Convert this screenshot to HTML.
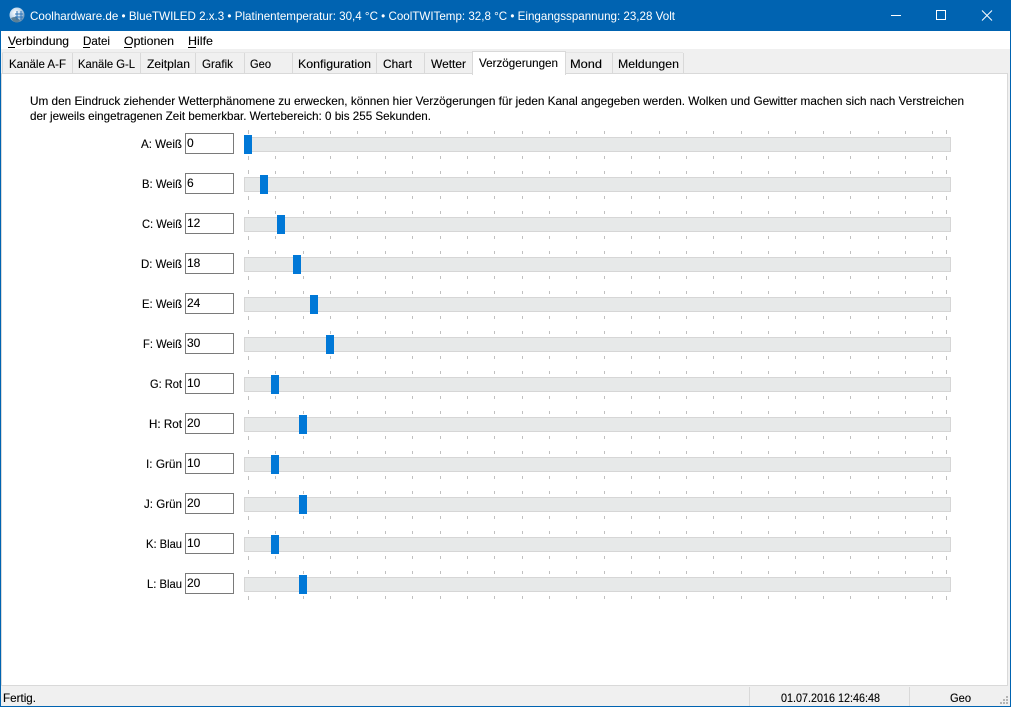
<!DOCTYPE html>
<html lang="de">
<head>
<meta charset="utf-8">
<title>BlueTWILED</title>
<style>
html,body{margin:0;padding:0;background:#fff;overflow:hidden}
svg{display:block;font-family:"Liberation Sans",sans-serif;font-size:12px}
text{fill:#000;stroke:#000;stroke-width:.12}
text.ti{fill:#fff;stroke:none}
.c{shape-rendering:crispEdges}
</style>
</head>
<body>
<svg width="1011" height="707" viewBox="0 0 1011 707" xmlns="http://www.w3.org/2000/svg">
<defs>
<radialGradient id="g" cx="40%" cy="35%" r="70%"><stop offset="0" stop-color="#ffffff"/><stop offset=".6" stop-color="#b9d3ea"/><stop offset="1" stop-color="#4f7fa8"/></radialGradient>
<g id="t" class="c"><path fill="none" stroke="#c0c0c0" d="M248.5 0v4M275.5 1v3M303.5 1v3M330.5 1v3M357.5 1v3M385.5 1v3M412.5 1v3M440.5 1v3M467.5 1v3M494.5 1v3M522.5 1v3M549.5 1v3M576.5 1v3M604.5 1v3M631.5 1v3M659.5 1v3M686.5 1v3M713.5 1v3M741.5 1v3M768.5 1v3M795.5 1v3M823.5 1v3M850.5 1v3M878.5 1v3M905.5 1v3M932.5 1v3M946.5 0v4M248.5 26v4M275.5 26v3M303.5 26v3M330.5 26v3M357.5 26v3M385.5 26v3M412.5 26v3M440.5 26v3M467.5 26v3M494.5 26v3M522.5 26v3M549.5 26v3M576.5 26v3M604.5 26v3M631.5 26v3M659.5 26v3M686.5 26v3M713.5 26v3M741.5 26v3M768.5 26v3M795.5 26v3M823.5 26v3M850.5 26v3M878.5 26v3M905.5 26v3M932.5 26v3M946.5 26v4"/>
<rect x="244.5" y="7.5" width="706" height="14" fill="#e7e9e9" stroke="#d6d6d6"/>
<rect x="185.5" y="3.5" width="48" height="20" fill="#fff" stroke="#7a7a7a"/></g>
</defs>

<rect class="c" width="1011" height="707" fill="#0063b1"/>
<rect class="c" x="1" y="31" width="1009" height="675" fill="#fff"/>

<!-- title -->
<circle cx="17" cy="15" r="7.5" fill="url(#g)"/>
<path d="M11 18q6-3 9 3l-3 1.500q-4 0-6-4.500z" fill="#5b7f95"/>
<path d="M17 11v9M21 11v9M15 14h8M15 17h8" stroke="#2a73b8" stroke-width="1" fill="none"/>
<text class="ti" x="30" y="20" textLength="645" lengthAdjust="spacingAndGlyphs">Coolhardware.de • BlueTWILED 2.x.3 • Platinentemperatur: 30,4 °C • CoolTWITemp: 32,8 °C • Eingangsspannung: 23,28 Volt</text>
<g class="c" fill="none" stroke="#fff">
<path d="M891 15.500h10"/>
<rect x="936.500" y="10.500" width="9" height="9"/>
</g>
<path d="M982 10.500l10 10M992 10.500l-10 10" stroke="#fff" fill="none"/>

<!-- menu -->
<text x="8" y="45" textLength="61" lengthAdjust="spacingAndGlyphs">Verbindung</text>
<text x="83" y="45" textLength="27" lengthAdjust="spacingAndGlyphs">Datei</text>
<text x="124" y="45" textLength="50" lengthAdjust="spacingAndGlyphs">Optionen</text>
<text x="188" y="45" textLength="25" lengthAdjust="spacingAndGlyphs">Hilfe</text>
<g class="c" fill="#000"><rect x="8" y="47" width="7" height="1"/><rect x="83" y="47" width="7" height="1"/><rect x="124" y="47" width="8" height="1"/><rect x="188" y="47" width="8" height="1"/></g>

<!-- tab strip -->
<g class="c">
<rect x="1" y="49" width="1009" height="637" fill="#f0f0f0"/>
<rect x="1.500" y="73.500" width="1006" height="612" fill="#fff" stroke="#d9d9d9"/>
<path fill="none" stroke="#e4e4e4" d="M2 52.500h681"/>
<path fill="none" stroke="#d9d9d9" d="M2.500 53v20M72.500 53v20M140.500 53v20M195.500 53v20M244.500 53v20M292.500 53v20M376.500 53v20M424.500 53v20M612.500 53v20M683.500 53v20"/>
<rect x="472.500" y="51.500" width="93" height="23" fill="#fff" stroke="#d9d9d9"/>
<rect x="473" y="73" width="92" height="2" fill="#fff"/>
</g>
<text x="9" y="68" textLength="57" lengthAdjust="spacingAndGlyphs">Kanäle A-F</text>
<text x="78" y="68" textLength="57" lengthAdjust="spacingAndGlyphs">Kanäle G-L</text>
<text x="147" y="68" textLength="43" lengthAdjust="spacingAndGlyphs">Zeitplan</text>
<text x="202" y="68" textLength="31" lengthAdjust="spacingAndGlyphs">Grafik</text>
<text x="250" y="68" textLength="21" lengthAdjust="spacingAndGlyphs">Geo</text>
<text x="298" y="68" textLength="73" lengthAdjust="spacingAndGlyphs">Konfiguration</text>
<text x="383" y="68" textLength="29" lengthAdjust="spacingAndGlyphs">Chart</text>
<text x="431" y="68" textLength="35" lengthAdjust="spacingAndGlyphs">Wetter</text>
<text x="479" y="67" textLength="79" lengthAdjust="spacingAndGlyphs">Verzögerungen</text>
<text x="570" y="68" textLength="32" lengthAdjust="spacingAndGlyphs">Mond</text>
<text x="618" y="68" textLength="61" lengthAdjust="spacingAndGlyphs">Meldungen</text>

<!-- paragraph -->
<text x="30" y="105" textLength="934" lengthAdjust="spacingAndGlyphs">Um den Eindruck ziehender Wetterphänomene zu erwecken, können hier Verzögerungen für jeden Kanal angegeben werden. Wolken und Gewitter machen sich nach Verstreichen</text>
<text x="30" y="120" textLength="401" lengthAdjust="spacingAndGlyphs">der jeweils eingetragenen Zeit bemerkbar. Wertebereich: 0 bis 255 Sekunden.</text>

<!-- rows -->
<use href="#t" y="130"/><use href="#t" y="170"/><use href="#t" y="210"/><use href="#t" y="250"/><use href="#t" y="290"/><use href="#t" y="330"/><use href="#t" y="370"/><use href="#t" y="410"/><use href="#t" y="450"/><use href="#t" y="490"/><use href="#t" y="530"/><use href="#t" y="570"/>

<g class="c" fill="#0078d7">
<rect x="244" y="135" width="8" height="19"/>
<rect x="260" y="175" width="8" height="19"/>
<rect x="277" y="215" width="8" height="19"/>
<rect x="293" y="255" width="8" height="19"/>
<rect x="310" y="295" width="8" height="19"/>
<rect x="326" y="335" width="8" height="19"/>
<rect x="271" y="375" width="8" height="19"/>
<rect x="299" y="415" width="8" height="19"/>
<rect x="271" y="455" width="8" height="19"/>
<rect x="299" y="495" width="8" height="19"/>
<rect x="271" y="535" width="8" height="19"/>
<rect x="299" y="575" width="8" height="19"/>
</g>

<text x="141" y="148" textLength="41" lengthAdjust="spacingAndGlyphs">A: Weiß</text>
<text x="142" y="188" textLength="40" lengthAdjust="spacingAndGlyphs">B: Weiß</text>
<text x="142" y="228" textLength="40" lengthAdjust="spacingAndGlyphs">C: Weiß</text>
<text x="141" y="268" textLength="41" lengthAdjust="spacingAndGlyphs">D: Weiß</text>
<text x="142" y="308" textLength="40" lengthAdjust="spacingAndGlyphs">E: Weiß</text>
<text x="143" y="348" textLength="39" lengthAdjust="spacingAndGlyphs">F: Weiß</text>
<text x="150" y="388" textLength="32" lengthAdjust="spacingAndGlyphs">G: Rot</text>
<text x="149" y="428" textLength="33" lengthAdjust="spacingAndGlyphs">H: Rot</text>
<text x="146" y="468" textLength="36" lengthAdjust="spacingAndGlyphs">I: Grün</text>
<text x="144" y="508" textLength="38" lengthAdjust="spacingAndGlyphs">J: Grün</text>
<text x="146" y="548" textLength="36" lengthAdjust="spacingAndGlyphs">K: Blau</text>
<text x="147" y="588" textLength="35" lengthAdjust="spacingAndGlyphs">L: Blau</text>

<text x="187" y="147">0</text>
<text x="187" y="187">6</text>
<text x="187" y="227">12</text>
<text x="187" y="267">18</text>
<text x="187" y="307">24</text>
<text x="187" y="347">30</text>
<text x="187" y="387">10</text>
<text x="187" y="427">20</text>
<text x="187" y="467">10</text>
<text x="187" y="507">20</text>
<text x="187" y="547">10</text>
<text x="187" y="587">20</text>

<!-- status bar -->
<g class="c">
<rect x="1" y="686" width="1009" height="20" fill="#f0f0f0"/>
<path fill="none" stroke="#d9d9d9" d="M749.500 687v19M909.500 687v19"/>
<g fill="#b4b4b4"><rect x="1006" y="696" width="2" height="2"/><rect x="1003" y="699" width="2" height="2"/><rect x="1006" y="699" width="2" height="2"/><rect x="1000" y="702" width="2" height="2"/><rect x="1003" y="702" width="2" height="2"/><rect x="1006" y="702" width="2" height="2"/></g>
</g>
<text x="3" y="702" textLength="33" lengthAdjust="spacingAndGlyphs">Fertig.</text>
<text x="781" y="702" textLength="99" lengthAdjust="spacingAndGlyphs">01.07.2016 12:46:48</text>
<text x="950" y="702" textLength="21" lengthAdjust="spacingAndGlyphs">Geo</text>
</svg>
</body>
</html>
